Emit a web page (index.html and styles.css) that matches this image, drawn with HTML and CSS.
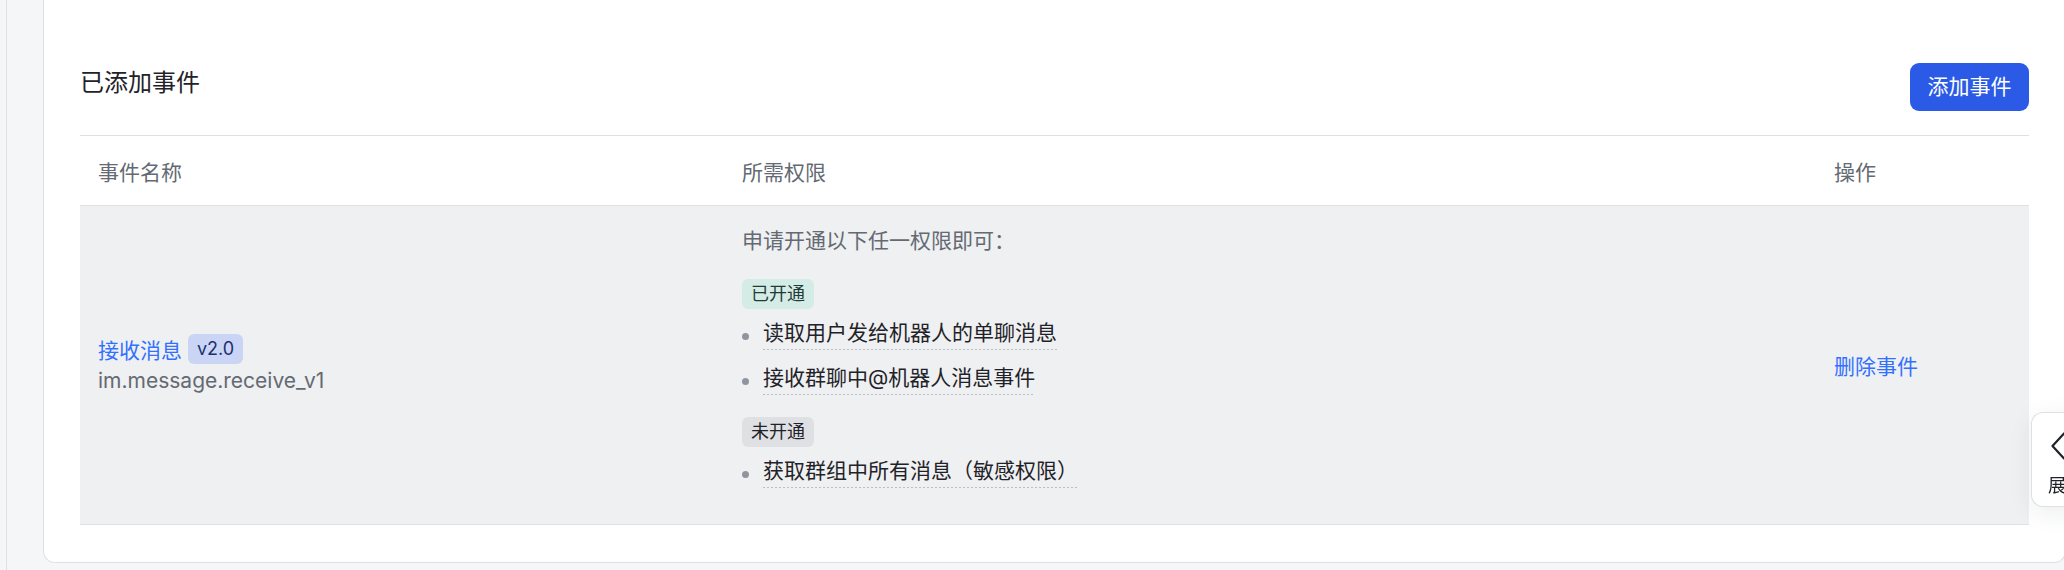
FILE: index.html
```html
<!DOCTYPE html>
<html lang="zh-CN">
<head>
<meta charset="utf-8">
<title>已添加事件</title>
<link rel="stylesheet" href="styles.css">
</head>
<body>
<div class="panel">
  <section class="card">
    <div class="card-head">
      <h2 class="card-title">已添加事件</h2>
      <button class="btn-primary" type="button">添加事件</button>
    </div>
    <table class="events">
      <colgroup>
        <col class="col-name">
        <col class="col-perm">
        <col class="col-op">
      </colgroup>
      <thead>
        <tr>
          <th>事件名称</th>
          <th>所需权限</th>
          <th>操作</th>
        </tr>
      </thead>
      <tbody>
        <tr>
          <td class="cell-name">
            <div class="name-line">
              <a class="link" href="#">接收消息</a>
              <span class="badge">v2.0</span>
            </div>
            <div class="event-key">im.message.receive_v1</div>
          </td>
          <td class="cell-perm">
            <div class="perm-intro">申请开通以下任一权限即可：</div>
            <span class="tag tag-on">已开通</span>
            <ul class="perm-list">
              <li><i class="dot"></i><span class="perm">读取用户发给机器人的单聊消息</span></li>
              <li><i class="dot"></i><span class="perm">接收群聊中@机器人消息事件</span></li>
            </ul>
            <span class="tag tag-off">未开通</span>
            <ul class="perm-list">
              <li><i class="dot"></i><span class="perm">获取群组中所有消息（敏感权限）</span></li>
            </ul>
          </td>
          <td class="cell-op"><a class="link" href="#">删除事件</a></td>
        </tr>
      </tbody>
    </table>
  </section>
</div>
<div class="side-tab">
  <svg class="chev" width="24" height="28" viewBox="0 0 24 28" aria-hidden="true"><path d="M14 1.5 L2.5 14 L14 26.5" fill="none" stroke="#1f2329" stroke-width="2.2" stroke-linecap="round" stroke-linejoin="round"/></svg>
  <span class="side-text">展开</span>
</div>
</body>
</html>
```

FILE: styles.css
```css
* { box-sizing: border-box; }
html, body {
  margin: 0;
  padding: 0;
  overflow: hidden;
}
body {
  background: #f5f6f7;
  font-family: Inter, "Noto Sans CJK SC", "Noto Sans", sans-serif;
  color: #1f2329;
  height: 570px;
}
.panel {
  margin-left: 6px;
  border-left: 1px solid #dee0e3;
  padding-left: 36px;
  height: 570px;
}
.card {
  width: 2023px;
  background: #fff;
  border: 1px solid #dee0e3;
  border-top: none;
  border-radius: 0 0 12px 12px;
  padding: 63px 36px 37px;
}
.card-head {
  display: flex;
  justify-content: space-between;
  align-items: flex-start;
  margin-bottom: 24px;
}
.card-title {
  margin: 2px 0 0;
  font-size: 24px;
  line-height: 36px;
  font-weight: 400;
  color: #1f2329;
}
.btn-primary {
  height: 48px;
  padding: 0 17.5px;
  border: none;
  border-radius: 9px;
  background: #2b5be6;
  color: #fff;
  font-family: inherit;
  font-size: 21px;
  line-height: 48px;
}
.events {
  width: 100%;
  border-collapse: collapse;
  table-layout: fixed;
}
.col-name { width: 644px; }
.col-perm { width: 1092px; }
.col-op { width: 213px; }
.events th {
  height: 70px;
  padding: 0 18px;
  text-align: left;
  font-size: 21px;
  font-weight: 400;
  color: #646a73;
  border-top: 1px solid #dee0e3;
  border-bottom: 1px solid #dee0e3;
}
.events td {
  background: #eff0f1;
  border-bottom: 1px solid #dee0e3;
  vertical-align: middle;
  padding: 0 18px;
  font-size: 21px;
}
.events td.cell-perm {
  padding: 18px 18px 36px;
}
.name-line {
  display: flex;
  align-items: center;
  gap: 6px;
  height: 30px;
}
.link {
  color: #3370ff;
  text-decoration: none;
  font-size: 21px;
}
.badge {
  display: inline-block;
  background: #cad5f6;
  color: #1d2f6f;
  font-size: 18px;
  line-height: 30px;
  padding: 0 9px;
  border-radius: 6px;
}
.event-key {
  margin-top: 2px;
  color: #646a73;
  font-size: 21px;
  line-height: 30px;
}
.perm-intro {
  color: #646a73;
  line-height: 33px;
  margin-bottom: 22px;
}
.tag {
  display: inline-block;
  font-size: 18px;
  line-height: 30px;
  padding: 0 9px;
  border-radius: 6px;
  vertical-align: top;
}
.tag-on {
  background: #d5ebe6;
  color: #1f3d36;
}
.tag-off {
  background: #dee0e3;
  color: #1f2329;
  margin-top: 22px;
}
.perm-list {
  list-style: none;
  margin: 7px 0 0;
  padding: 0;
}
.perm-list li {
  display: flex;
  align-items: center;
}
.perm-list li + li {
  margin-top: 11px;
}
.dot {
  width: 7px;
  height: 7px;
  border-radius: 50%;
  background: #8f959e;
  margin: 6px 14px 0 0;
  flex: none;
}
.perm {
  display: inline-block;
  line-height: 33px;
  color: #1f2329;
  padding-bottom: 1px;
  background: linear-gradient(to right, #bbbfc4 50%, transparent 50%) left bottom / 4px 1px repeat-x;
}
.side-tab {
  position: fixed;
  left: 2031px;
  top: 412px;
  width: 72px;
  height: 95px;
  background: #fff;
  border: 1px solid #dee0e3;
  border-right: none;
  border-radius: 12px 0 0 12px;
  box-shadow: 0 6px 24px rgba(31, 35, 41, 0.08);
  padding: 19px 0 0 16px;
  display: flex;
  flex-direction: column;
  align-items: flex-start;
}
.chev {
  display: block;
  margin-left: 2px;
}
.side-text {
  margin-top: 12px;
  font-size: 18px;
  line-height: 27px;
  color: #1f2329;
  white-space: nowrap;
}
```
